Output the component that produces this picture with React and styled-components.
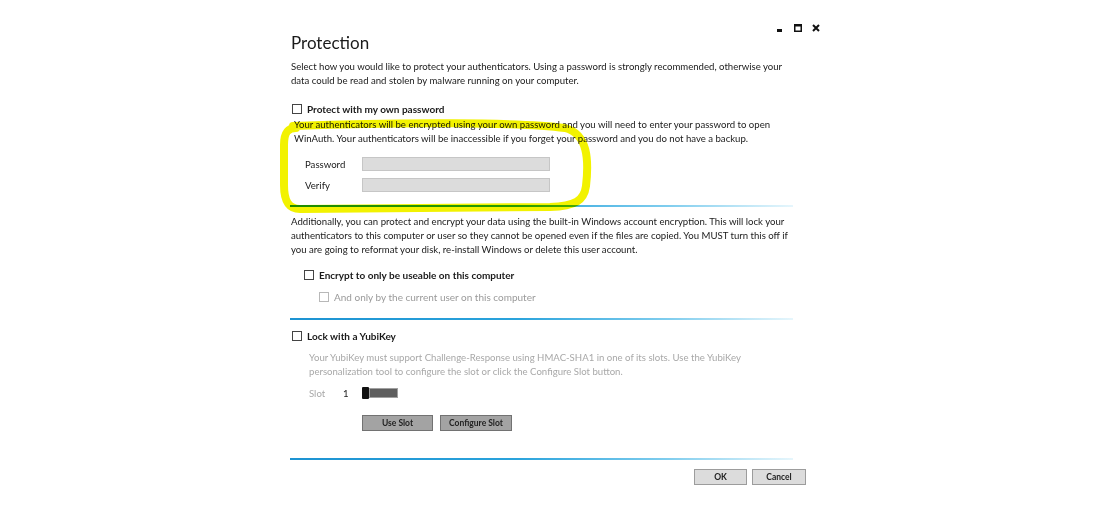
import React from 'react';
import styled, { createGlobalStyle } from 'styled-components';

const GlobalStyle = createGlobalStyle`
  body {
    margin: 0;
    background: #fff;
    font-family: Lato, "Open Sans", sans-serif;
    color: #1a1a1a;
  }
`;

const Dialog = styled.div`
  position: relative;
  width: 540px;
  margin: 0 auto;
  padding: 0 14px 0 11px;
  box-sizing: border-box;
  display: flex;
  flex-direction: column;
`;

const Controls = styled.div`
  display: flex;
  justify-content: flex-end;
  align-items: flex-end;
  gap: 10px;
  height: 10px;
  padding-top: 22px;
  margin-right: -14px;
`;

const Title = styled.h1`
  margin: 0;
  font-size: 17px;
  font-weight: 400;
  line-height: 22px;
  color: #1a1a1a;
`;

const Text = styled.p`
  margin: ${p => p.$top || 0}px 0 0 ${p => p.$indent || 0}px;
  font-size: 9.6px;
  line-height: ${p => p.$lh || 14}px;
  color: ${p => (p.$muted ? '#a8a8a8' : '#1a1a1a')};
  white-space: nowrap;
`;

const CheckRow = styled.label`
  display: flex;
  align-items: center;
  gap: 5px;
  height: 14px;
  margin: ${p => p.$top || 0}px 0 0 ${p => p.$indent || 0}px;
  font-size: 10px;
  font-weight: ${p => (p.$muted ? 400 : 700)};
  color: ${p => (p.$muted ? '#9a9a9a' : '#1a1a1a')};
`;

const Box = styled.span`
  width: 8px;
  height: 8px;
  border: 1px solid ${p => (p.$muted ? '#b8b8b8' : '#444')};
  background: #fff;
`;

const FieldRow = styled.div`
  display: flex;
  align-items: center;
  height: 14px;
  margin: ${p => p.$top || 0}px 0 0 14px;
  font-size: 9.6px;
`;

const FieldLabel = styled.span`
  width: 57px;
  color: #1a1a1a;
`;

const Input = styled.div`
  width: 186px;
  height: 12px;
  background: #dcdcdc;
  border: 1px solid #c6c6c6;
`;

const Separator = styled.div`
  height: 2px;
  margin: ${p => p.$top || 0}px 13px 0 -1px;
  background: linear-gradient(90deg, #1d93d2 0%, #2aa3dc 45%, #7fcdee 75%, #e6f6fc 100%);
`;

const SlotRow = styled.div`
  display: flex;
  align-items: center;
  height: 14px;
  margin: 7px 0 0 18px;
  font-size: 9.6px;
`;

const SlotLabel = styled.span`
  width: 34px;
  color: #a8a8a8;
`;

const SlotNum = styled.span`
  width: 19px;
  color: #1a1a1a;
`;

const Slider = styled.div`
  display: flex;
  align-items: center;
`;

const Thumb = styled.span`
  width: 7px;
  height: 12px;
  background: #111;
  border-radius: 1px;
`;

const Track = styled.span`
  width: 27px;
  height: 8px;
  background: #5e5e5e;
  border: 1px solid #a0a0a0;
`;

const ButtonRow = styled.div`
  display: flex;
  gap: ${p => p.$gap || 7}px;
  justify-content: ${p => (p.$end ? 'flex-end' : 'flex-start')};
  margin: ${p => p.$top || 0}px 0 0 ${p => p.$indent || 0}px;
`;

const Button = styled.button`
  width: ${p => p.$w}px;
  height: 16px;
  padding: 0;
  font-family: inherit;
  font-size: 8.5px;
  font-weight: 700;
  color: #222;
  background: ${p => (p.$dim ? '#a3a3a3' : '#dcdcdc')};
  border: 1px solid ${p => (p.$dim ? '#727272' : '#9c9c9c')};
  border-radius: 0;
`;

const Marker = styled.svg`
  position: absolute;
  left: 0;
  top: 0;
  width: 540px;
  height: 513px;
  pointer-events: none;
  mix-blend-mode: multiply;
`;

function WindowControls() {
  return (
    <Controls>
      <svg width="8" height="8" viewBox="0 0 8 8">
        <rect x="1" y="5" width="5" height="3" fill="#111" />
      </svg>
      <svg width="8" height="8" viewBox="0 0 8 8">
        <rect x="0.75" y="0.75" width="6.5" height="6.5" fill="none" stroke="#111" strokeWidth="1.5" />
        <rect x="0.5" y="0.5" width="7" height="2" fill="#111" />
      </svg>
      <svg width="8" height="8" viewBox="0 0 8 8">
        <path d="M1 1 L7 7 M7 1 L1 7" stroke="#111" strokeWidth="2" />
      </svg>
    </Controls>
  );
}

function Check({ children, muted, top, indent }) {
  return (
    <CheckRow $muted={muted} $top={top} $indent={indent}>
      <Box $muted={muted} />
      {children}
    </CheckRow>
  );
}

export default function App() {
  return (
    <>
      <GlobalStyle />
      <Dialog>
        <WindowControls />
        <Title>Protection</Title>
        <Text $top={6} $lh={13.5}>
          Select how you would like to protect your authenticators. Using a password is strongly recommended, otherwise your
          <br />
          data could be read and stolen by malware running on your computer.
        </Text>

        <Check top={15} indent={1}>Protect with my own password</Check>
        <Text $top={2} $indent={3}>
          Your authenticators will be encrypted using your own password and you will need to enter your password to open
          <br />
          WinAuth. Your authenticators will be inaccessible if you forget your password and you do not have a backup.
        </Text>
        <FieldRow $top={11}>
          <FieldLabel>Password</FieldLabel>
          <Input />
        </FieldRow>
        <FieldRow $top={7}>
          <FieldLabel>Verify</FieldLabel>
          <Input />
        </FieldRow>

        <Separator $top={13} />

        <Text $top={8}>
          Additionally, you can protect and encrypt your data using the built-in Windows account encryption. This will lock your
          <br />
          authenticators to this computer or user so they cannot be opened even if the files are copied. You MUST turn this off if
          <br />
          you are going to reformat your disk, re-install Windows or delete this user account.
        </Text>
        <Check top={11} indent={13}>Encrypt to only be useable on this computer</Check>
        <Check top={8} indent={28} muted>And only by the current user on this computer</Check>

        <Separator $top={14} />

        <Check top={9} indent={1}>Lock with a YubiKey</Check>
        <Text $top={8} $indent={18} $muted>
          Your YubiKey must support Challenge-Response using HMAC-SHA1 in one of its slots. Use the YubiKey
          <br />
          personalization tool to configure the slot or click the Configure Slot button.
        </Text>
        <SlotRow>
          <SlotLabel>Slot</SlotLabel>
          <SlotNum>1</SlotNum>
          <Slider>
            <Thumb />
            <Track />
          </Slider>
        </SlotRow>
        <ButtonRow $top={15} $indent={71}>
          <Button $w={71} $dim>Use Slot</Button>
          <Button $w={72} $dim>Configure Slot</Button>
        </ButtonRow>

        <Separator $top={27} />

        <ButtonRow $top={9} $end $gap={5}>
          <Button $w={53}>OK</Button>
          <Button $w={54}>Cancel</Button>
        </ButtonRow>

        <Marker viewBox="0 0 540 513">
          <path
            d="M13 126 C120 122 240 122 285 128 C308 134 309 160 306 186 C304 201 295 206 270 207 L20 209 C8 209 4 200 4 185 L4 145 C4 132 8 128 16 128"
            fill="none"
            stroke="#f2f200"
            strokeWidth="8"
            strokeLinecap="round"
            strokeLinejoin="round"
          />
        </Marker>
      </Dialog>
    </>
  );
}
